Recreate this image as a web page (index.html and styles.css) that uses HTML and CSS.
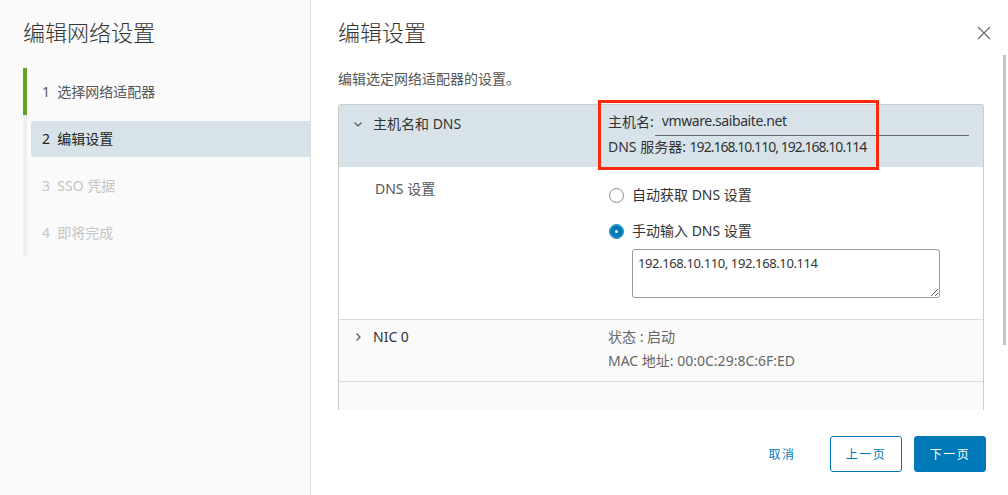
FILE: index.html
```html
<!DOCTYPE html>
<html lang="zh-CN">
<head>
    <meta charset="UTF-8">
    <meta name="viewport" content="width=device-width, initial-scale=1.0">
    <title>编辑网络设置</title>
    <link rel="stylesheet" href="styles.css">
</head>
<body>
    <div class="wizard">
        <aside class="sidebar">
            <h2 class="sidebar-title">编辑网络设置</h2>
            <ul class="steps">
                <li class="step step-done"><span class="step-label">1 &nbsp;选择网络适配器</span></li>
                <li class="step step-current"><span class="step-label">2 &nbsp;编辑设置</span></li>
                <li class="step step-todo"><span class="step-label">3 &nbsp;SSO 凭据</span></li>
                <li class="step step-todo"><span class="step-label">4 &nbsp;即将完成</span></li>
            </ul>
        </aside>

        <main class="main">
            <div class="main-header">
                <h3 class="main-title">编辑设置</h3>
                <button class="close-btn" aria-label="关闭">
                    <svg width="14" height="14" viewBox="0 0 14 14"><path d="M1 1L13 13M13 1L1 13" stroke="#6a6a6a" stroke-width="1.2" fill="none"/></svg>
                </button>
            </div>

            <div class="body">
                <div class="body-content">
                    <p class="description">编辑选定网络适配器的设置。</p>

                    <div class="stack">
                        <div class="stack-row stack-row-open">
                            <div class="stack-label">
                                <svg class="chevron" width="10" height="10" viewBox="0 0 10 10"><path d="M1.5 3.5L5 7L8.5 3.5" stroke="#565656" stroke-width="1.2" fill="none"/></svg>
                                <span>主机名和 DNS</span>
                            </div>
                            <div class="stack-value">
                                <div class="host-line">
                                    <span>主机名:</span>
                                    <input class="host-input" type="text" value="vmware.saibaite.net">
                                </div>
                                <div class="value-line">DNS 服务器: <span class="ip">192.168.10.110, 192.168.10.114</span></div>
                            </div>
                            <div class="highlight-box"></div>
                        </div>

                        <div class="stack-row stack-row-child">
                            <div class="stack-label child-label">DNS 设置</div>
                            <div class="stack-value radios">
                                <label class="radio-line">
                                    <input type="radio" name="dns">
                                    <span>自动获取 DNS 设置</span>
                                </label>
                                <label class="radio-line">
                                    <input type="radio" name="dns" checked>
                                    <span>手动输入 DNS 设置</span>
                                </label>
                                <textarea class="dns-text">192.168.10.110, 192.168.10.114</textarea>
                            </div>
                        </div>

                        <div class="stack-row stack-row-closed">
                            <div class="stack-label">
                                <svg class="chevron" width="10" height="10" viewBox="0 0 10 10"><path d="M3.5 1.5L7 5L3.5 8.5" stroke="#565656" stroke-width="1.2" fill="none"/></svg>
                                <span>NIC 0</span>
                            </div>
                            <div class="stack-value muted">
                                <div class="value-line">状态 : 启动</div>
                                <div class="value-line">MAC 地址: 00:0C:29:8C:6F:ED</div>
                            </div>
                        </div>

                        <div class="stack-row stack-row-empty"></div>
                    </div>
                </div>
                <div class="scrollbar"><div class="scroll-thumb"></div></div>
            </div>

            <div class="footer">
                <button class="btn btn-link">取消</button>
                <button class="btn btn-outline">上一页</button>
                <button class="btn btn-primary">下一页</button>
            </div>
        </main>
    </div>
</body>
</html>
```

FILE: styles.css
```css
* {
    box-sizing: border-box;
}
body {
    margin: 0;
    font-family: "Noto Sans", "Noto Sans CJK SC", sans-serif;
    font-size: 14px;
    color: #565656;
    background-color: #fff;
}
.wizard {
    display: flex;
    height: 495px;
    overflow: hidden;
}

/* left side: wizard steps */
.sidebar {
    width: 311px;
    flex-shrink: 0;
    background-color: #fafafa;
    border-right: 1px solid #dedede;
}
.sidebar-title {
    margin: 18px 0 0 23px;
    font-size: 22px;
    font-weight: 300;
    line-height: 28px;
    color: #333;
}
.steps {
    list-style: none;
    margin: 22px 0 0 23px;
    padding: 0;
}
.step {
    height: 47px;
    display: flex;
    align-items: center;
    border-left: 4px solid #eee;
    padding-left: 4px;
}
.step-label {
    flex: 1;
    height: 36px;
    display: flex;
    align-items: center;
    padding-left: 11px;
    border-radius: 3px 0 0 3px;
    line-height: 20px;
}
.step-done {
    border-left-color: #62a420;
    color: #565656;
}
.step-current .step-label {
    background-color: #d8e3e9;
    color: #222;
}
.step-todo {
    color: #c5c5c5;
}

/* right side */
.main {
    flex: 1;
    display: flex;
    flex-direction: column;
    min-width: 0;
}
.main-header {
    display: flex;
    justify-content: space-between;
    align-items: flex-start;
    padding: 18px 17px 0 27px;
    height: 55px;
}
.main-title {
    margin: 0;
    font-size: 22px;
    font-weight: 300;
    line-height: 28px;
    color: #333;
}
.close-btn {
    border: none;
    background: none;
    padding: 0;
    margin-top: 8px;
    width: 14px;
    height: 14px;
    cursor: pointer;
}
.close-btn svg {
    display: block;
}
.body {
    display: flex;
    height: 355px;
    padding-left: 27px;
    overflow: hidden;
}
.body-content {
    flex: 1;
    min-width: 0;
}
.scrollbar {
    width: 3px;
    margin: 0 2px 0 19px;
}
.scroll-thumb {
    height: 290px;
    background-color: #c5c5c5;
}
.description {
    margin: 14px 0 15px;
    line-height: 20px;
    color: #565656;
}

/* stack view */
.stack {
    position: relative;
    border: 1px solid #ccc;
    border-bottom: none;
    border-radius: 3px 3px 0 0;
}
.stack-row {
    position: relative;
    display: flex;
}
.stack-label {
    width: 269px;
    flex-shrink: 0;
    display: flex;
    align-items: center;
    gap: 10px;
    padding-left: 14px;
    height: 20px;
    line-height: 20px;
    color: #333;
}
.chevron {
    display: block;
}
.stack-value {
    flex: 1;
    min-width: 0;
    padding-right: 14px;
    color: #333;
}
.value-line {
    line-height: 20px;
    white-space: nowrap;
}
.ip {
    letter-spacing: -0.07em;
}
.muted .value-line {
    color: #666;
    line-height: 24px;
}
.stack-row-open {
    background-color: #d8e3e9;
    height: 62px;
    padding-top: 5px;
    border-radius: 3px 3px 0 0;
    z-index: 1;
}
.stack-row-open .stack-label {
    margin-top: 4px;
}
.host-line {
    display: flex;
    align-items: flex-end;
    height: 26px;
    gap: 1px;
    margin-bottom: 1px;
}
.host-line span {
    flex-shrink: 0;
    white-space: nowrap;
    line-height: 20px;
    padding-bottom: 4px;
}
.host-input {
    flex: 1;
    min-width: 0;
    border: none;
    border-bottom: 1px solid #6a6a6a;
    background: transparent;
    font: inherit;
    letter-spacing: -0.03em;
    color: #333;
    padding: 0 0 4px 7px;
    line-height: 20px;
    outline: none;
}
.highlight-box {
    position: absolute;
    left: 259px;
    top: -5px;
    width: 281px;
    height: 70px;
    border: 3px solid #fb2a0c;
    pointer-events: none;
}
.stack-row-child {
    background-color: #fff;
    height: 152px;
    padding-top: 12px;
}
.child-label {
    padding-left: 36px;
    color: #565656;
}
.radios {
    display: flex;
    flex-direction: column;
    align-items: flex-start;
    padding-top: 6px;
}
.radio-line {
    display: flex;
    align-items: center;
    gap: 8px;
    line-height: 20px;
    margin-bottom: 16px;
    margin-left: 1px;
    color: #333;
}
.radio-line:nth-child(2) {
    margin-bottom: 8px;
}
.radio-line input {
    appearance: none;
    -webkit-appearance: none;
    width: 15px;
    height: 15px;
    margin: 0;
    border-radius: 50%;
    border: 1px solid #8c8c8c;
    background-color: #fff;
}
.radio-line input:checked {
    border-color: #0079b8;
    box-shadow: inset 0 0 0 5px #0079b8;
}
.dns-text {
    width: 308px;
    height: 49px;
    margin-left: 24px;
    border: 1px solid #9a9a9a;
    border-radius: 3px;
    font: inherit;
    font-size: 13px;
    letter-spacing: -0.03em;
    color: #333;
    padding: 3px 5px;
    line-height: 20px;
}
.stack-row-closed {
    background-color: #fafafa;
    border-top: 1px solid #ddd;
    height: 62px;
    padding-top: 5px;
}
.stack-row-closed .stack-label {
    margin-top: 2px;
}
.stack-row-empty {
    background-color: #fafafa;
    border-top: 1px solid #ddd;
    height: 60px;
}

/* footer buttons */
.footer {
    display: flex;
    justify-content: flex-end;
    align-items: flex-start;
    gap: 12px;
    padding: 26px 22px 0 0;
}
.btn {
    min-width: 72px;
    height: 36px;
    padding: 0 12px;
    border-radius: 3px;
    border: 1px solid transparent;
    font-family: "Noto Sans", "Noto Sans CJK SC", sans-serif;
    font-size: 12px;
    letter-spacing: 0.12em;
    cursor: pointer;
    background: none;
}
.btn-link {
    color: #0079b8;
}
.btn-outline {
    border-color: #0079b8;
    color: #0079b8;
    background-color: #fff;
}
.btn-primary {
    background-color: #0079b8;
    border-color: #0079b8;
    color: #fff;
}
.btn-primary:hover {
    background-color: #004d8a;
}
```
